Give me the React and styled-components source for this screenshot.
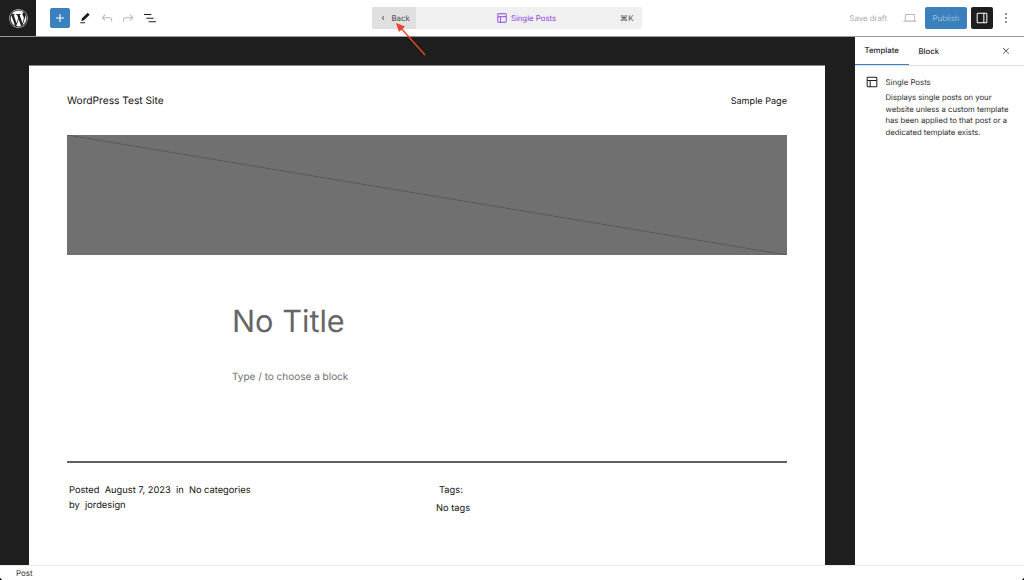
import React from "react";
import styled, { createGlobalStyle } from "styled-components";
import { FaWordpress } from "react-icons/fa";

const GlobalStyle = createGlobalStyle`
	html, body {
		margin: 0;
		padding: 0;
		height: 100%;
		overflow: hidden;
		background: #fff;
		font-family: Inter, "Liberation Sans", sans-serif;
		text-rendering: geometricPrecision;
	}
`;

const paths = {
	plus: "M18 11.2h-5.2V6h-1.6v5.2H6v1.6h5.2V18h1.6v-5.2H18z",
	pen: "m19 7-3-3-8.5 8.5-1 4 4-1L19 7Zm-7 11.5H5V20h7v-1.5Z",
	undo: "M18.3 11.7c-.6-.6-1.4-.9-2.3-.9H6.7l2.9-3.3-1.1-1-4.5 5L8.5 16l1-1-2.7-2.7H16c.5 0 .9.2 1.3.5 1 1 1 3.4 1 4.5v.3h1.5v-.2c0-1.5 0-4.3-1.5-5.7z",
	redo: "M15.6 6.5l-1.1 1 2.9 3.3H8c-.9 0-1.7.3-2.3.9-1.4 1.5-1.4 4.2-1.4 5.6v.2h1.5v-.3c0-1.1 0-3.5 1-4.5.3-.3.7-.5 1.3-.5h9.2L14.5 15l1.1 1.1 4.6-4.6-4.6-5z",
	list: "M3 6h11v1.5H3V6Zm3.5 5.5h11V13h-11v-1.5ZM21 17H10v1.5h11V17Z",
	layout: "M18 5.5H6a.5.5 0 00-.5.5v3h13V6a.5.5 0 00-.5-.5zm.5 5H10v8h8a.5.5 0 00.5-.5v-7.5zm-10 0h-3V18a.5.5 0 00.5.5h2.5v-8zM6 4h12a2 2 0 012 2v12a2 2 0 01-2 2H6a2 2 0 01-2-2V6a2 2 0 012-2z",
	chevron: "m13.1 16-3.4-4 3.4-4 1.1 1-2.6 3 2.6 3-1.1 1z",
	desktop: "M20.5 16h-.7V8c0-1.1-.9-2-2-2H6.2c-1.1 0-2 .9-2 2v8h-.7c-.8 0-1.5.7-1.5 1.5h20c0-.8-.7-1.5-1.5-1.5zM5.7 8c0-.3.2-.5.5-.5h11.6c.3 0 .5.2.5.5v7.6H5.7V8z",
	sidebar: "M18 4H6c-1.1 0-2 .9-2 2v12c0 1.1.9 2 2 2h12c1.1 0 2-.9 2-2V6c0-1.1-.9-2-2-2zm-4 14.5H6c-.3 0-.5-.2-.5-.5V6c0-.3.2-.5.5-.5h8v13zm4.5-.5c0 .3-.2.5-.5.5h-2.5v-13H18c.3 0 .5.2.5.5v12z",
	more: "M13 19h-2v-2h2v2zm0-6h-2v-2h2v2zm0-6h-2V5h2v2z",
	close: "M13 11.8l6.1-6.3-1-1-6.1 6.2-6.1-6.3-1 1 6.1 6.3-6.5 6.7 1 1 6.5-6.6 6.5 6.6 1-1z"
};

const Icon = ({ name, size = 16, color = "#1e1e1e" }) => (
	<svg width={size} height={size} viewBox='0 0 24 24' fill={color}>
		<path d={paths[name]} />
	</svg>
);

const Shell = styled.div`
	position: relative;
	width: 1024px;
	height: 580px;
	display: flex;
	flex-direction: column;
	overflow: hidden;
	background: #fff;
`;

const Header = styled.header`
	flex: 0 0 37px;
	box-sizing: border-box;
	display: grid;
	grid-template-columns: 372px 270px 1fr;
	align-items: center;
	border-bottom: 1px solid #9a9a9a;
`;

const ToolGroup = styled.div`
	display: flex;
	align-items: center;
	height: 36px;
`;

const LogoTile = styled.div`
	width: 36px;
	height: 36px;
	background: #1e1e1e;
	color: #fff;
	display: flex;
	align-items: center;
	justify-content: center;
	font-size: 19px;
`;

const InserterButton = styled.div`
	width: 20px;
	height: 20px;
	margin: 0 4.5px 0 14px;
	border-radius: 2px;
	background: #3a80bd;
	display: flex;
	align-items: center;
	justify-content: center;
`;

const ToolButton = styled.div`
	width: 21.5px;
	height: 20px;
	display: flex;
	align-items: center;
	justify-content: center;
`;

const CommandBar = styled.div`
	height: 22px;
	border-radius: 2px;
	background: #f0f0f0;
	display: grid;
	grid-template-columns: 44px 1fr 44px;
	align-items: center;
	font-size: 7.8px;
`;

const BackButton = styled.div`
	height: 100%;
	background: #e0e0e0;
	border-radius: 2px 0 0 2px;
	color: #4a4a4a;
	display: flex;
	align-items: center;
	padding-left: 5px;
	gap: 2.5px;
`;

const CommandTitle = styled.div`
	display: flex;
	align-items: center;
	justify-content: center;
	gap: 2px;
	color: #8b3fe0;
	padding-left: 37px;
`;

const Shortcut = styled.div`
	color: #4a4a4a;
	text-align: right;
	padding-right: 8px;
	letter-spacing: 0.5px;
`;

const ActionGroup = styled(ToolGroup)`
	justify-content: flex-end;
	padding-right: 10px;
`;

const SaveDraft = styled.span`
	font-size: 7.8px;
	color: #a7a7a7;
	margin-right: 15px;
`;

const DeviceButton = styled.div`
	display: flex;
	margin-right: 7px;
`;

const PublishButton = styled.div`
	width: 42px;
	height: 22px;
	border-radius: 2px;
	background: #3a80bd;
	color: #9dc0dd;
	font-size: 7.8px;
	display: flex;
	align-items: center;
	justify-content: center;
	margin-right: 4px;
`;

const SidebarToggle = styled.div`
	width: 22px;
	height: 22px;
	background: #1e1e1e;
	border-radius: 2px;
	display: flex;
	align-items: center;
	justify-content: center;
	margin-right: 5px;
`;

const Body = styled.div`
	flex: 1;
	display: flex;
	min-height: 0;
`;

const Canvas = styled.main`
	width: 855px;
	box-sizing: border-box;
	background: #1e1e1e;
	padding: 28px 30px 0 29px;
	overflow: hidden;
`;

const Page = styled.article`
	box-sizing: border-box;
	height: 100%;
	background: #fff;
	border-top: 1px solid #8a8a8a;
	padding: 0 38px;
	color: #111;
`;

const SiteRow = styled.div`
	height: 69px;
	padding-top: 1px;
	box-sizing: border-box;
	display: flex;
	align-items: center;
	justify-content: space-between;
`;

const SiteName = styled.span`
	font-size: 10.2px;
`;

const SiteLink = styled.span`
	font-size: 9.1px;
`;

const Hero = styled.div`
	height: 120px;
	background: #707070;
	svg {
		display: block;
		width: 100%;
		height: 100%;
	}
`;

const PostBody = styled.div`
	padding-left: 165px;
	height: 206px;
	box-sizing: border-box;
`;

const PostTitle = styled.h1`
	margin: 0;
	padding-top: 46px;
	font-size: 30.7px;
	line-height: 42px;
	font-weight: 400;
	color: #666;
`;

const BlockHint = styled.p`
	margin: 0;
	padding-top: 26px;
	font-size: 10px;
	line-height: 16px;
	color: #707070;
`;

const Divider = styled.hr`
	margin: 0;
	border: 0;
	height: 2px;
	background: #606060;
`;

const MetaColumns = styled.div`
	display: grid;
	grid-template-columns: 369px 1fr;
	padding-top: 20px;
	font-size: 9.3px;
	line-height: 15px;
`;

const MetaLine = styled.div`
	padding-left: 2px;
	white-space: pre;
`;

const TagLabel = styled.div`
	padding-left: 3px;
`;

const TagValue = styled.div`
	margin-top: 3px;
`;

const Sidebar = styled.aside`
	flex: 1;
	background: #fff;
`;

const Tabs = styled.div`
	display: flex;
	align-items: center;
	height: 28px;
	border-bottom: 1px solid #e0e0e0;
	font-size: 7.8px;
	font-weight: 500;
	color: #1e1e1e;
`;

const Tab = styled.div`
	box-sizing: border-box;
	width: ${props => props.width}px;
	height: 28px;
	display: flex;
	align-items: center;
	padding: 0 0 1px 9.5px;
	border-bottom: ${props => (props.active ? "1px solid #3582c4" : "0")};
`;

const TabClose = styled.div`
	margin-left: auto;
	margin-right: 13px;
	display: flex;
`;

const TemplateCard = styled.div`
	display: grid;
	grid-template-columns: 16px 1fr;
	column-gap: 5px;
	padding: 8px 8px 0 8.5px;
	color: #2c2c2c;
`;

const CardName = styled.div`
	font-size: 7.8px;
	line-height: 12px;
	margin: 2px 0 4px;
	padding-left: 1px;
`;

const CardText = styled.div`
	font-size: 7.7px;
	line-height: 11.7px;
	padding-left: 1px;
	white-space: pre;
`;

const StatusBar = styled.footer`
	flex: 0 0 15px;
	box-sizing: border-box;
	background: #fff;
	border-top: 1px solid #ececec;
	padding-left: 16px;
	font-size: 8px;
	line-height: 14px;
	color: #333;
`;

const Arrow = styled.svg`
	position: absolute;
	left: 390px;
	top: 20px;
`;

const Corner = styled.div`
	position: absolute;
	bottom: 0;
	width: 3px;
	height: 3px;
	${props => (props.left ? "left: 0;" : "right: 0;")}
	background: ${props =>
		`radial-gradient(circle at ${props.left ? "100% 0" : "0 0"}, transparent 2.6px, #1e1e1e 3px)`};
`;

const App = () => (
	<Shell>
		<GlobalStyle />
		<Header>
			<ToolGroup>
				<LogoTile>
					<FaWordpress />
				</LogoTile>
				<InserterButton>
					<Icon name='plus' color='#fff' />
				</InserterButton>
				<ToolButton>
					<Icon name='pen' />
				</ToolButton>
				<ToolButton>
					<Icon name='undo' color='#b8b8b8' />
				</ToolButton>
				<ToolButton>
					<Icon name='redo' color='#b8b8b8' />
				</ToolButton>
				<ToolButton>
					<Icon name='list' />
				</ToolButton>
			</ToolGroup>
			<CommandBar>
				<BackButton>
					<Icon name='chevron' size={12} color='#3c3c3c' />
					Back
				</BackButton>
				<CommandTitle>
					<Icon name='layout' size={14} color='#8b3fe0' />
					Single Posts
				</CommandTitle>
				<Shortcut>⌘K</Shortcut>
			</CommandBar>
			<ActionGroup>
				<SaveDraft>Save draft</SaveDraft>
				<DeviceButton>
					<Icon name='desktop' size={16} color='#b8b8b8' />
				</DeviceButton>
				<PublishButton>Publish</PublishButton>
				<SidebarToggle>
					<Icon name='sidebar' color='#fff' />
				</SidebarToggle>
				<Icon name='more' />
			</ActionGroup>
		</Header>
		<Body>
			<Canvas>
				<Page>
					<SiteRow>
						<SiteName>WordPress Test Site</SiteName>
						<SiteLink>Sample Page</SiteLink>
					</SiteRow>
					<Hero>
						<svg viewBox='0 0 720 120' preserveAspectRatio='none'>
							<line x1='0' y1='0' x2='720' y2='120' stroke='#5a5a5a' strokeWidth='1' />
						</svg>
					</Hero>
					<PostBody>
						<PostTitle>No Title</PostTitle>
						<BlockHint>Type / to choose a block</BlockHint>
					</PostBody>
					<Divider />
					<MetaColumns>
						<div>
							<MetaLine>Posted  August 7, 2023  in  No categories</MetaLine>
							<MetaLine>by  jordesign</MetaLine>
						</div>
						<div>
							<TagLabel>Tags:</TagLabel>
							<TagValue>No tags</TagValue>
						</div>
					</MetaColumns>
				</Page>
			</Canvas>
			<Sidebar>
				<Tabs>
					<Tab active width={54}>Template</Tab>
					<Tab width={40}>Block</Tab>
					<TabClose>
						<Icon name='close' size={10} />
					</TabClose>
				</Tabs>
				<TemplateCard>
					<Icon name='layout' />
					<div>
						<CardName>Single Posts</CardName>
						<CardText>{"Displays single posts on your\nwebsite unless a custom template\nhas been applied to that post or a\ndedicated template exists."}</CardText>
					</div>
				</TemplateCard>
			</Sidebar>
		</Body>
		<StatusBar>Post</StatusBar>
		<Arrow width='40' height='40' viewBox='0 0 40 40'>
			<line x1='35' y1='35' x2='10' y2='7' stroke='#e8452c' strokeWidth='1.4' />
			<polygon points='6,3 15,6.5 9,12' fill='#e8452c' />
		</Arrow>
		<Corner left />
		<Corner />
	</Shell>
);

export default App;
